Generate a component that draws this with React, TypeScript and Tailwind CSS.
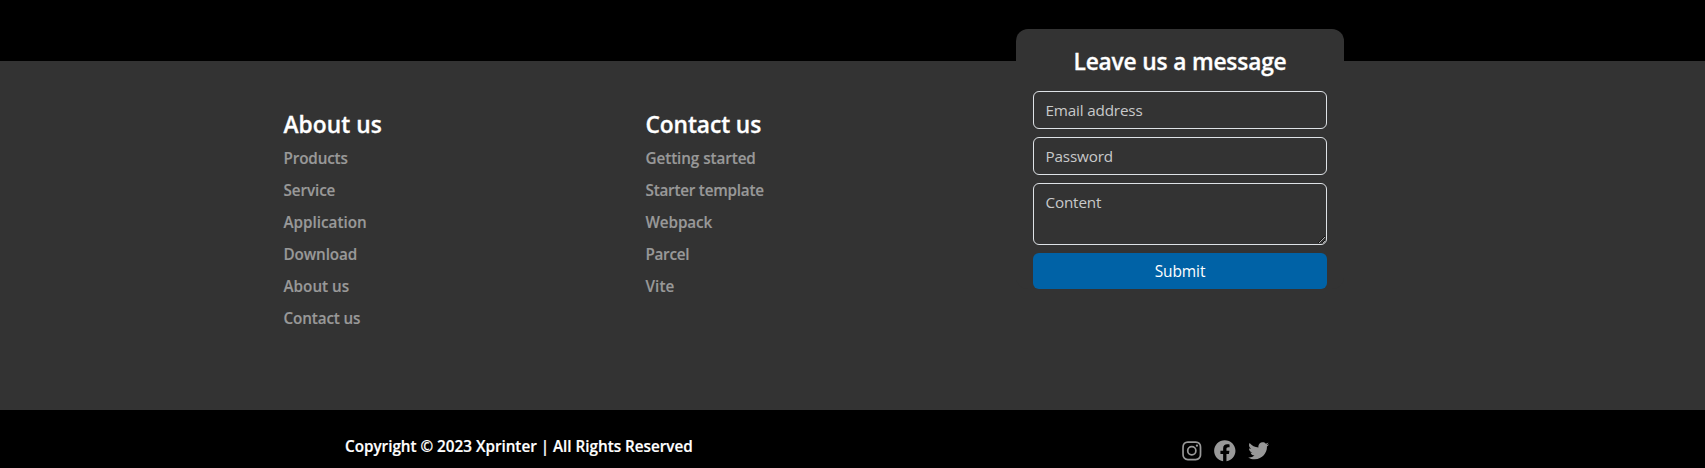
import { BiLogoFacebookCircle, BiLogoInstagram, BiLogoTwitter } from "react-icons/bi";

const columns = [
  {
    title: "About us",
    width: "w-[362px]",
    titleTracking: "tracking-[0.05px]",
    links: [
      { label: "Products", tracking: "tracking-[-0.15px]" },
      { label: "Service", tracking: "tracking-[-0.1px]" },
      { label: "Application", tracking: "tracking-[-0.01px]" },
      { label: "Download", tracking: "tracking-[-0.1px]" },
      { label: "About us", tracking: "tracking-[0px]" },
      { label: "Contact us", tracking: "tracking-[-0.13px]" },
    ],
  },
  {
    title: "Contact us",
    width: "w-[370.5px]",
    titleTracking: "tracking-[-0.1px]",
    links: [
      { label: "Getting started", tracking: "tracking-[-0.08px]" },
      { label: "Starter template", tracking: "tracking-[-0.23px]" },
      { label: "Webpack", tracking: "tracking-[-0.1px]" },
      { label: "Parcel", tracking: "tracking-[-0.3px]" },
      { label: "Vite", tracking: "tracking-[0.1px]" },
    ],
  },
];

const fieldClass =
  "block w-full rounded-md border border-[#dee2e6] bg-transparent pr-3 pl-[11.5px] text-[15.25px] leading-6 tracking-[-0.17px] text-white outline-none placeholder:text-[#c8c9ca]";

export default function App() {
  return (
    <div className="flex h-[468px] flex-col overflow-hidden bg-black pt-[61px] font-['Open_Sans','Noto_Sans',sans-serif] text-white">
      <footer className="flex h-[349px] shrink-0 items-start bg-[#333333] pl-[283.5px]">
        {columns.map((column) => (
          <section key={column.title} className={`${column.width} shrink-0 pt-[49px]`}>
            <h2
              className={`h-[32px] text-[22.75px] leading-[29px] font-semibold [-webkit-text-stroke:0.3px] ${column.titleTracking}`}
            >
              {column.title}
            </h2>
            <ul>
              {column.links.map((link) => (
                <li key={link.label} className="h-8">
                  <a
                    href="#"
                    className={`text-[15.25px] leading-8 font-semibold text-[#999999] [-webkit-text-stroke:0.15px] ${link.tracking}`}
                  >
                    {link.label}
                  </a>
                </li>
              ))}
            </ul>
          </section>
        ))}
        <form className="-mt-8 flex w-[328px] shrink-0 flex-col gap-2 rounded-xl bg-[#333333] px-[17px] pt-[18px]">
          <h2 className="h-9 text-center text-[22.75px] leading-[29px] font-semibold tracking-[-0.18px] [-webkit-text-stroke:0.3px]">
            Leave us a message
          </h2>
          <input type="email" placeholder="Email address" className={`${fieldClass} h-[38px]`} />
          <input type="password" placeholder="Password" className={`${fieldClass} h-[38px]`} />
          <textarea placeholder="Content" className={`${fieldClass} h-[62px] resize-y py-1.5`} />
          <button type="button" className="h-9 rounded-md bg-[#0062a6] text-[15.5px] leading-6 tracking-[-0.1px]">
            Submit
          </button>
        </form>
      </footer>
      <div className="flex h-[58px] shrink-0 items-start justify-between pr-[433.5px] pl-[345px]">
        <p className="pt-6 text-[15.25px] leading-6 font-semibold tracking-[-0.01px] whitespace-nowrap [-webkit-text-stroke:0.2px]">
          Copyright © 2023 Xprinter | All Rights Reserved
        </p>
        <div className="flex items-center gap-2 pt-7 text-[#999999]">
          <BiLogoInstagram size={25.6} />
          <BiLogoFacebookCircle size={25.6} />
          <BiLogoTwitter size={25.6} />
        </div>
      </div>
    </div>
  );
}
